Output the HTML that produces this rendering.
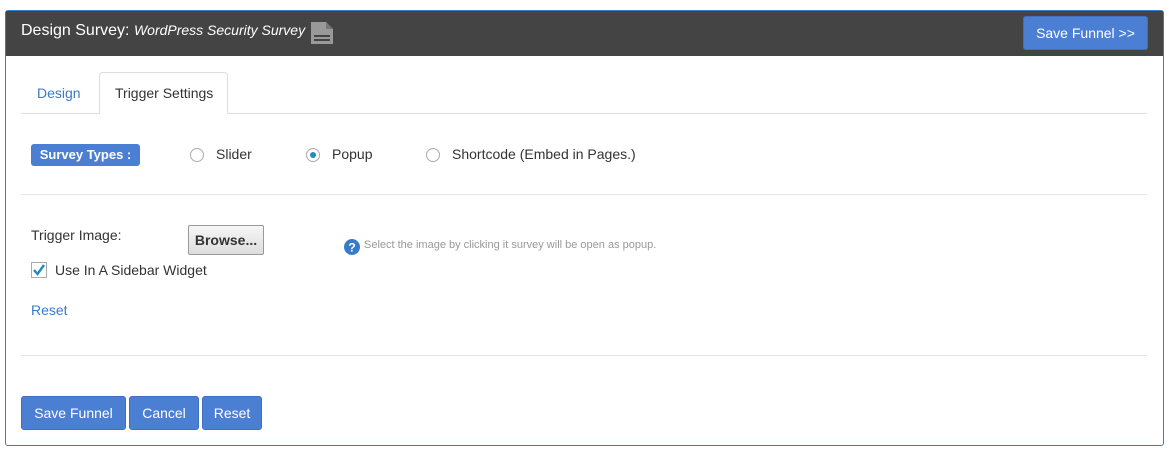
<!DOCTYPE html>
<html><head><style>
body{margin:0;background:#fff;font-family:"Liberation Sans",sans-serif;font-size:14px;color:#333;width:1174px;height:461px;position:relative;overflow:hidden}
.a{position:absolute}
.panel{left:5px;top:10px;width:1157px;height:434px;border:1px solid #3a7bc8;border-radius:3px}
.hdr{left:6px;top:11px;width:1157px;height:45px;background:#444}
.btn{background:#4a7fd4;color:#fff;border-radius:3px;font-size:14px;text-align:center;border:1px solid #3f70c0;box-sizing:border-box}
.radio{width:14px;height:14px;border:1px solid #aaa;border-radius:50%;box-sizing:border-box;background:#fff}
.hr{height:1px;background:#e5e5e5;left:21px;width:1126px}
</style></head><body>
<div class="a panel"></div>
<div class="a hdr"></div>
<div class="a" style="left:21px;top:22px;color:#fff;font-size:16px">Design Survey: <i style="font-size:14px">WordPress Security Survey</i></div>
<svg class="a" style="left:309px;top:20px" width="26" height="26" viewBox="0 0 26 26"><path d="M2 2h15l7 7v15H2z" fill="#999"/><path d="M17 2v7h7" fill="#777"/><rect x="5" y="15" width="16" height="2" fill="#444"/><rect x="5" y="19" width="16" height="2" fill="#444"/></svg>
<div class="a btn" style="left:1023px;top:16px;width:125px;height:34px;line-height:32px">Save Funnel &gt;&gt;</div>
<div class="a" style="left:21px;top:113px;width:1126px;height:1px;background:#ddd"></div>
<div class="a" style="left:37px;top:85px;color:#3a7bc8">Design</div>
<div class="a" style="left:99px;top:72px;width:129px;height:42px;border:1px solid #ddd;border-bottom:none;border-radius:4px 4px 0 0;background:#fff;box-sizing:border-box"></div>
<div class="a" style="left:115px;top:85px">Trigger Settings</div>
<div class="a" style="left:31px;top:144px;width:109px;height:22px;background:#4a7fd4;border-radius:3px;color:#fff;font-weight:bold;font-size:13px;line-height:22px;text-align:center">Survey Types :</div>
<div class="a radio" style="left:190px;top:148px"></div><div class="a" style="left:216px;top:146px">Slider</div>
<div class="a radio" style="left:306px;top:148px"></div><div class="a" style="left:310px;top:152px;width:6px;height:6px;border-radius:50%;background:#1e8cbe"></div><div class="a" style="left:332px;top:146px">Popup</div>
<div class="a radio" style="left:426px;top:148px"></div><div class="a" style="left:452px;top:146px">Shortcode (Embed in Pages.)</div>
<div class="a hr" style="top:194px"></div>
<div class="a" style="left:31px;top:227px">Trigger Image:</div>
<div class="a" style="left:188px;top:225px;width:76px;height:30px;border:1px solid #999;border-radius:2px;background:linear-gradient(#f6f6f6,#ddd);box-sizing:border-box;font-weight:bold;line-height:28px;text-align:center">Browse...</div>
<svg class="a" style="left:344px;top:239px" width="16" height="16"><circle cx="8" cy="8" r="8" fill="#3a7bc8"/><text x="8" y="12.5" font-size="12" font-weight="bold" fill="#fff" text-anchor="middle" font-family="Liberation Sans">?</text></svg>
<div class="a" style="left:364px;top:239px;font-size:11px;color:#999">Select the image by clicking it survey will be open as popup.</div>
<div class="a" style="left:31px;top:262px;width:16px;height:16px;border:1px solid #aaa;box-sizing:border-box;background:#fff"></div>
<svg class="a" style="left:32px;top:263px" width="14" height="14"><path d="M2 7l3.5 4L12 2" stroke="#1e8cbe" stroke-width="2.4" fill="none"/></svg>
<div class="a" style="left:55px;top:262px">Use In A Sidebar Widget</div>
<div class="a" style="left:31px;top:302px;color:#3a7bc8">Reset</div>
<div class="a hr" style="top:355px"></div>
<div class="a btn" style="left:21px;top:396px;width:105px;height:34px;line-height:32px">Save Funnel</div>
<div class="a btn" style="left:129px;top:396px;width:70px;height:34px;line-height:32px">Cancel</div>
<div class="a btn" style="left:202px;top:396px;width:60px;height:34px;line-height:32px">Reset</div>
</body></html>
